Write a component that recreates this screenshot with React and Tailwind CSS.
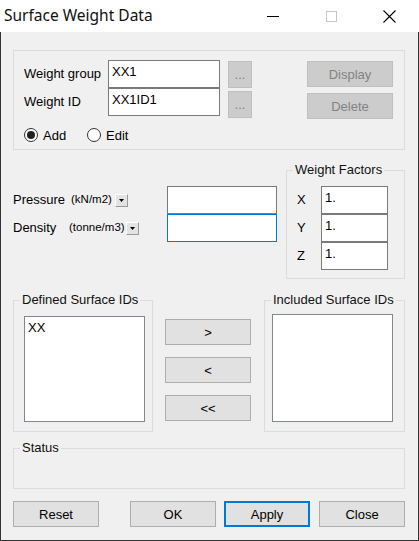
import React from 'react'

function Btn({ children, className = '', disabled, focused }) {
  // botón estilo Windows clásico
  const base = disabled
    ? 'bg-[#cccccc] border border-[#bfbfbf] text-[#838383]'
    : focused
    ? 'bg-[#e1e1e1] border-2 border-[#0078d7] text-black'
    : 'bg-[#e1e1e1] border border-[#adadad] text-black'
  return (
    <button type="button" className={`flex items-center justify-center text-[13px] leading-none ${base} ${className}`}>
      {children}
    </button>
  )
}

function Campo({ value, className = '', focused }) {
  return (
    <div
      className={`bg-white border pl-[3px] pt-[3px] leading-[15px] text-[13px] ${
        focused ? 'border-[#0078d7]' : 'border-[#7a7a7a]'
      } ${className}`}
    >
      {value}
    </div>
  )
}

function Grupo({ titulo, className = '', children }) {
  return (
    <fieldset className={`border border-[#dcdcdc] ${className}`}>
      {titulo && (
        <legend className="ml-[6px] px-[2px] leading-[16px] text-[13px] text-[#111]">{titulo}</legend>
      )}
      {children}
    </fieldset>
  )
}

function Radio({ label, checked, className = '' }) {
  return (
    <div className={`flex items-center ${className}`}>
      <span className="w-[14px] h-[14px] rounded-full border border-[#333] bg-white flex items-center justify-center">
        {checked && <span className="w-[8px] h-[8px] rounded-full bg-[#222]" />}
      </span>
      <span className="ml-[5px] leading-none">{label}</span>
    </div>
  )
}

function Desplegable() {
  return (
    <div className="w-[13px] h-[13px] bg-[#e3e3e3] border border-t-white border-l-white border-r-[#9a9a9a] border-b-[#9a9a9a] flex items-center justify-center">
      <svg width="5" height="3" viewBox="0 0 5 3">
        <path d="M0 0h5L2.5 3z" fill="#000" />
      </svg>
    </div>
  )
}

function BarraTitulo() {
  return (
    <div className="h-[32px] bg-white flex items-center shrink-0">
      <span className="pl-[4px] text-[15.5px] font-['Noto_Sans',sans-serif] text-[#111]">Surface Weight Data</span>
      <div className="ml-auto flex h-full pr-[1px]">
        <div className="w-[58px] h-full flex items-center justify-center">
          <svg width="12" height="1" viewBox="0 0 12 1">
            <rect width="12" height="1" fill="#000" />
          </svg>
        </div>
        <div className="w-[58px] h-full flex items-center justify-center">
          <svg width="11" height="11" viewBox="0 0 11 11">
            <rect x="0.5" y="0.5" width="10" height="10" fill="none" stroke="#c6c6c6" />
          </svg>
        </div>
        <div className="w-[58px] h-full flex items-center justify-center">
          <svg width="13" height="13" viewBox="0 0 13 13">
            <path d="M0.5 0.5L12.5 12.5M12.5 0.5L0.5 12.5" stroke="#000" strokeWidth="1.1" />
          </svg>
        </div>
      </div>
    </div>
  )
}

export default function App() {
  return (
    <div className="w-[419px] h-[541px] flex flex-col bg-[#f0f0f0] font-['Liberation_Sans',Arial,sans-serif] text-[13px] text-black">
      <BarraTitulo />

      <div className="flex-1 flex flex-col border-x border-b border-[#333] pl-[12px] pr-[13px]">
        {/* Grupo superior */}
        <Grupo className="mt-[18px] h-[100px]">
          <div className="flex pt-[9px] pl-[10px] pr-[11px]">
            <div className="flex flex-col">
              <div className="flex items-center h-[28px]">
                <span className="w-[84px]">Weight group</span>
                <Campo value="XX1" className="w-[112px] h-[28px]" />
              </div>
              <div className="flex items-center h-[28px]">
                <span className="w-[84px]">Weight ID</span>
                <Campo value="XX1ID1" className="w-[112px] h-[28px]" />
              </div>
              <div className="flex items-center mt-[12px] h-[14px]">
                <Radio label="Add" checked className="w-[63px]" />
                <Radio label="Edit" />
              </div>
            </div>
            <div className="ml-[8px] pt-[1px] flex flex-col gap-[3px]">
              <Btn disabled className="w-[24px] h-[27px]">...</Btn>
              <Btn disabled className="w-[24px] h-[27px]">...</Btn>
            </div>
            <div className="ml-auto pt-[1px] flex flex-col gap-[6px]">
              <Btn disabled className="w-[86px] h-[26px]">Display</Btn>
              <Btn disabled className="w-[86px] h-[26px]">Delete</Btn>
            </div>
          </div>
        </Grupo>

        {/* Presión / densidad + factores */}
        <div className="mt-[12px] flex justify-between items-start">
          <div className="mt-[24px] flex flex-col">
            <div className="flex items-center h-[28px]">
              <div className="w-[154px] flex items-center">
                <span className="w-[58px]">Pressure</span>
                <span className="w-[44px] text-[11.5px]">(kN/m2)</span>
                <Desplegable />
              </div>
              <Campo value="" className="w-[110px] h-[28px]" />
            </div>
            <div className="flex items-center h-[28px]">
              <div className="w-[154px] flex items-center">
                <span className="w-[56px]">Density</span>
                <span className="w-[57px] text-[11.5px]">(tonne/m3)</span>
                <Desplegable />
              </div>
              <Campo value="" focused className="w-[110px] h-[28px]" />
            </div>
          </div>

          <Grupo titulo="Weight Factors" className="w-[119px]">
            <div className="pl-[10px] pt-[8px] pb-[8px] flex flex-col">
              {['X', 'Y', 'Z'].map((eje) => (
                <div key={eje} className="flex items-center h-[28px]">
                  <span className="w-[24px]">{eje}</span>
                  <Campo value="1." className="w-[67px] h-[28px]" />
                </div>
              ))}
            </div>
          </Grupo>
        </div>

        {/* Listas de superficies */}
        <div className="mt-[13px] flex items-start">
          <Grupo titulo="Defined Surface IDs" className="w-[140px]">
            <div className="pl-[10px] pt-[8px] pb-[9px]">
              <div className="w-[121px] h-[106px] bg-white border border-[#828790] pl-[3px] pt-[3px] leading-[15px]">XX</div>
            </div>
          </Grupo>
          <div className="ml-[12px] mt-[27px] flex flex-col gap-[12px]">
            <Btn className="w-[86px] h-[26px]">&gt;</Btn>
            <Btn className="w-[86px] h-[26px]">&lt;</Btn>
            <Btn className="w-[86px] h-[26px]">&lt;&lt;</Btn>
          </div>
          <Grupo titulo="Included Surface IDs" className="ml-auto w-[141px]">
            <div className="pl-[7px] pt-[6px] pb-[9px]">
              <div className="w-[121px] h-[108px] bg-white border border-[#828790]" />
            </div>
          </Grupo>
        </div>

        {/* Estado */}
        <Grupo titulo="Status" className="mt-[8px]">
          <div className="h-[32px]" />
        </Grupo>

        {/* Botones inferiores */}
        <div className="mt-[12px] flex">
          <Btn className="w-[86px] h-[26px]">Reset</Btn>
          <Btn className="w-[86px] h-[26px] ml-[31px]">OK</Btn>
          <Btn focused className="w-[86px] h-[26px] ml-[8px]">Apply</Btn>
          <Btn className="w-[86px] h-[26px] ml-[9px]">Close</Btn>
        </div>
      </div>
    </div>
  )
}
